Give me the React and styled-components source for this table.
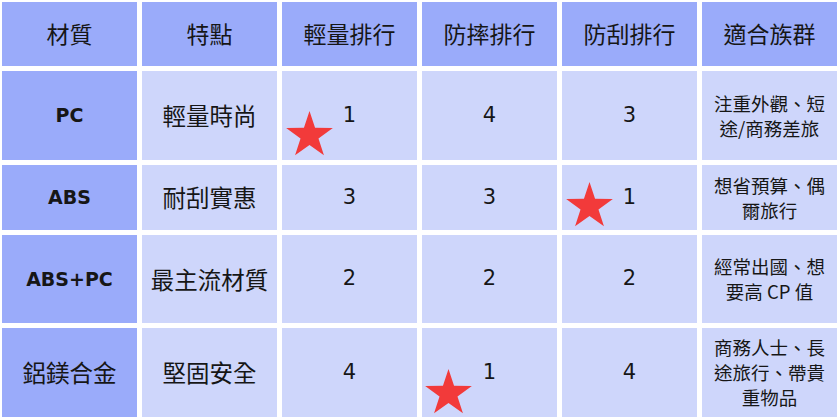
import React from "react";
import styled, { createGlobalStyle } from "styled-components";

const Global = createGlobalStyle`
  html, body { margin: 0; padding: 0; background: #ffffff; }
  #root { width: 840px; height: 420px; }
`;

const Table = styled.div`
  display: grid;
  grid-template-columns: repeat(6, 135px);
  grid-template-rows: 64px 89px 65px 88px 89px;
  gap: 5px;
  padding: 2px 0 0 2px;
`;

const cjk = `"Noto Sans CJK TC", "Noto Sans CJK SC", sans-serif`;
const latin = `"DejaVu Sans", "Noto Sans CJK TC", sans-serif`;

const Cell = styled.div`
  position: relative;
  display: flex;
  align-items: center;
  justify-content: center;
  text-align: center;
  color: #161616;
  background: ${(p) => (p.$tone === "dark" ? "#9aabfa" : "#ced6fb")};
  font-family: ${(p) => (p.$kind === "num" || p.$kind === "bold" ? latin : cjk)};
  font-size: ${(p) =>
    p.$kind === "num" ? "21px" : p.$kind === "bold" ? "19px" : p.$kind === "small" ? "18.5px" : "23.5px"};
  font-weight: ${(p) => (p.$kind === "bold" ? 700 : 400)};
  line-height: ${(p) => (p.$kind === "small" ? "25px" : "1.2")};
  white-space: pre-line;
`;

const Header = styled(Cell).attrs({ $tone: "dark" })`
  font-size: 23px;
`;

const StarMark = styled.svg`
  position: absolute;
  left: ${(p) => p.$left}px;
  top: ${(p) => p.$top}px;
  width: 47px;
  height: 45px;
`;

const Star = ({ left, top }) => (
  <StarMark $left={left} $top={top} viewBox="0 0 47 45">
    <polygon
      fill="#f23a3a"
      points="23.5,0 29.05,16.86 46.85,16.98 32.48,27.44 37.94,44.32 23.5,33.93 9.06,44.32 14.52,27.44 0.15,16.98 17.95,16.86"
    />
  </StarMark>
);

const headers = ["材質", "特點", "輕量排行", "防摔排行", "防刮排行", "適合族群"];

const rows = [
  { mat: "PC", matKind: "bold", feat: "輕量時尚", r: ["1", "4", "3"], star: 0, starPos: [4, 40], fit: "注重外觀、短\n途/商務差旅" },
  { mat: "ABS", matKind: "bold", feat: "耐刮實惠", r: ["3", "3", "1"], star: 2, starPos: [4, 17], fit: "想省預算、偶\n爾旅行" },
  { mat: "ABS+PC", matKind: "bold", feat: "最主流材質", r: ["2", "2", "2"], star: -1, fit: "經常出國、想\n要高 CP 值" },
  { mat: "鋁鎂合金", matKind: "cjk", feat: "堅固安全", r: ["4", "1", "4"], star: 1, starPos: [3, 41], fit: "商務人士、長\n途旅行、帶貴\n重物品" },
];

export default function App() {
  return (
    <>
      <Global />
      <Table>
        {headers.map((h) => (
          <Header key={h}>{h}</Header>
        ))}
        {rows.map((row) => (
          <React.Fragment key={row.mat}>
            <Cell $tone="dark" $kind={row.matKind}>{row.mat}</Cell>
            <Cell $kind="cjk">{row.feat}</Cell>
            {row.r.map((v, i) => (
              <Cell key={i} $kind="num">
                {row.star === i && <Star left={row.starPos[0]} top={row.starPos[1]} />}
                {v}
              </Cell>
            ))}
            <Cell $kind="small">{row.fit}</Cell>
          </React.Fragment>
        ))}
      </Table>
    </>
  );
}
